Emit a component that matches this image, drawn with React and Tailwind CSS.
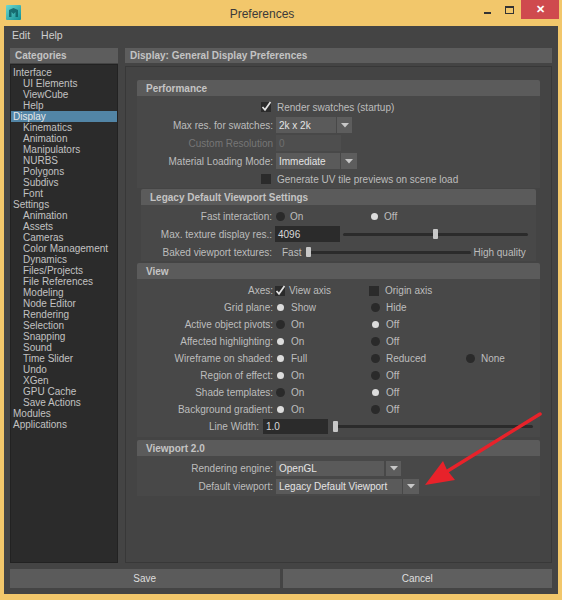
import React from 'react';

const categories = [
  ['Interface', 0], ['UI Elements', 1], ['ViewCube', 1], ['Help', 1], ['Display', 0, true],
  ['Kinematics', 1], ['Animation', 1], ['Manipulators', 1], ['NURBS', 1], ['Polygons', 1],
  ['Subdivs', 1], ['Font', 1], ['Settings', 0], ['Animation', 1], ['Assets', 1], ['Cameras', 1],
  ['Color Management', 1], ['Dynamics', 1], ['Files/Projects', 1], ['File References', 1],
  ['Modeling', 1], ['Node Editor', 1], ['Rendering', 1], ['Selection', 1], ['Snapping', 1],
  ['Sound', 1], ['Time Slider', 1], ['Undo', 1], ['XGen', 1], ['GPU Cache', 1],
  ['Save Actions', 1], ['Modules', 0], ['Applications', 0],
];

const viewRadios = [
  ['Grid plane:', ['Show', 'Hide'], 0],
  ['Active object pivots:', ['On', 'Off'], 1],
  ['Affected highlighting:', ['On', 'Off'], 0],
  ['Wireframe on shaded:', ['Full', 'Reduced', 'None'], 0],
  ['Region of effect:', ['On', 'Off'], 0],
  ['Shade templates:', ['On', 'Off'], 1],
  ['Background gradient:', ['On', 'Off'], 0],
];

function Radio({ on }) {
  return (
    <div className="w-[8px] h-[8px] flex items-center justify-center shrink-0">
      {on ? (
        <div className="w-[7px] h-[7px] rounded-full bg-[#dcdcdc] shrink-0" />
      ) : (
        <div className="w-[9px] h-[9px] rounded-full bg-[#2a2a2a] shrink-0" />
      )}
    </div>
  );
}

function Check({ on }) {
  return (
    <div className="relative w-[10px] h-[10px] bg-[#2b2b2b] shrink-0">
      {on && (
        <svg className="absolute -top-[2px] left-0" width="11" height="12" viewBox="0 0 11 12">
          <path d="M1.5 7 L4 9.8 L9.5 2" fill="none" stroke="#e2e2e2" strokeWidth="1.7" />
        </svg>
      )}
    </div>
  );
}

function Dropdown({ value, w, aw = 15, gap = 'ml-[1px]', h = 'h-[16px]' }) {
  return (
    <div className="flex items-center">
      <div className={`${w} ${h} bg-[#5a5a5a] text-[#e4e4e4] pl-[3px] flex items-center whitespace-nowrap`}>{value}</div>
      <div className={`${gap} ${h} bg-[#5d5d5d] flex items-center justify-center`} style={{ width: aw }}>
        <svg width="8" height="5" viewBox="0 0 8 5">
          <path d="M0 0 L8 0 L4 4.5 Z" fill="#c8c8c8" />
        </svg>
      </div>
    </div>
  );
}

function SectionHeader({ title }) {
  return (
    <div className="h-[16px] bg-[#5b5b5b] rounded-t-[2px] pl-[9px] flex items-center font-bold text-[#c4c4c4]">
      {title}
    </div>
  );
}

export default function App() {
  return (
    <div className="relative w-[562px] h-[600px] bg-[#f2c76b] flex flex-col overflow-hidden font-['Liberation_Sans',Arial,sans-serif] text-[10px] text-[#bdbdbd] whitespace-nowrap">
      {/* Title bar */}
      <div className="h-[26px] flex items-start shrink-0">
        <div className="w-[26px] pl-[6px] pt-[5px]">
          <svg width="15" height="15" viewBox="0 0 15 15">
            <defs>
              <linearGradient id="mi" x1="0" y1="0" x2="1" y2="1">
                <stop offset="0" stopColor="#6fd9d0" />
                <stop offset="1" stopColor="#128f95" />
              </linearGradient>
            </defs>
            <rect x="0" y="0" width="15" height="15" rx="1" fill="url(#mi)" />
            <path d="M3 12 L3 5 L7.5 3 L12 5 L12 12 L9.5 12 L9.5 7 L7.5 9 L5.5 7 L5.5 12 Z" fill="#0d5b60" opacity="0.8" />
          </svg>
        </div>
        <div className="flex-1 text-center pl-[18px] pt-[5px] text-[12px] text-[#3a3a3a]">Preferences</div>
        <div className="w-[82px] flex items-start">
          <div className="w-[7px] h-[2px] bg-[#333] mt-[12px] ml-[4px]" />
          <div className="w-[9px] h-[8px] border border-[#333] border-t-2 mt-[6px] ml-[14px]" />
          <div className="ml-[7px] w-[38px] h-[19px] bg-[#cf4a4e] flex items-center justify-center text-white font-bold text-[11px]">
            ✕
          </div>
        </div>
      </div>

      {/* Window body */}
      <div className="flex-1 mx-[4px] mb-[6px] bg-[#444444] flex flex-col px-[6px] pb-[6px]">
        {/* Menu */}
        <div className="h-[20px] flex items-center gap-[11px] pl-[2px] text-[10.5px] text-[#cfcfcf]">
          <span>Edit</span>
          <span>Help</span>
        </div>

        <div className="mt-[2px] h-[515px] flex gap-[7px]">
          {/* Categories */}
          <div className="w-[108px] shrink-0 flex flex-col">
            <div className="h-[15px] bg-[#5d5d5d] pl-[5px] flex items-center font-bold text-[#c4c4c4]">Categories</div>
            <div className="mt-[1px] flex-1 bg-[#2b2b2b] border border-[#222] pt-[2px] overflow-hidden">
              {categories.map(([name, lvl, sel], i) => (
                <div
                  key={i}
                  className={`h-[11px] leading-[11px] ${lvl ? 'pl-[12px]' : 'pl-[2px]'} ${sel ? 'bg-[#5285a6] text-[#e8e8e8]' : 'text-[#c2c2c2]'}`}
                >
                  {name}
                </div>
              ))}
            </div>
          </div>

          {/* Right panel */}
          <div className="flex-1 min-w-0 flex flex-col">
            <div className="h-[15px] bg-[#5d5d5d] pl-[5px] flex items-center font-bold text-[#c4c4c4]">
              Display: General Display Preferences
            </div>
            <div className="mt-[3px] flex-1 bg-[#444] border border-[#383838] px-[11px] pt-[13px] overflow-hidden">
              {/* Performance */}
              <SectionHeader title="Performance" />
              <div className="bg-[#484848] pt-[2px]">
                <div className="h-[18px] flex items-center">
                  <div className="w-[136px] shrink-0 flex justify-end pr-[2px]"><Check on /></div>
                  <span className="ml-[4px]">Render swatches (startup)</span>
                </div>
                <div className="h-[18px] flex items-center">
                  <div className="w-[136px] shrink-0 text-right">Max res. for swatches:</div>
                  <div className="ml-[3px]"><Dropdown value="2k x 2k" w="w-[60px]" /></div>
                </div>
                <div className="h-[18px] flex items-center">
                  <div className="w-[136px] shrink-0 text-right text-[#767676]">Custom Resolution</div>
                  <div className="ml-[3px] w-[65px] h-[16px] bg-[#4e4e4e] pl-[3px] flex items-center text-[#6e6e6e]">0</div>
                </div>
                <div className="h-[18px] flex items-center">
                  <div className="w-[136px] shrink-0 text-right">Material Loading Mode:</div>
                  <div className="ml-[3px]"><Dropdown value="Immediate" w="w-[64px]" aw={16} /></div>
                </div>
                <div className="h-[18px] flex items-center">
                  <div className="w-[136px] shrink-0 flex justify-end pr-[2px]"><Check /></div>
                  <span className="ml-[4px]">Generate UV tile previews on scene load</span>
                </div>
              </div>

              {/* Legacy */}
              <div className="mt-[1px] mx-[4px]">
                <SectionHeader title="Legacy Default Viewport Settings" />
                <div className="bg-[#484848] pt-[2px]">
                  <div className="h-[18px] flex items-center">
                    <div className="w-[131px] shrink-0 text-right">Fast interaction:</div>
                    <div className="ml-[3px] w-[94px] flex items-center pl-[1px]">
                      <Radio /><span className="ml-[6px]">On</span>
                    </div>
                    <div className="w-[94px] flex items-center pl-[1px]">
                      <Radio on /><span className="ml-[6px]">Off</span>
                    </div>
                  </div>
                  <div className="h-[18px] flex items-center">
                    <div className="w-[131px] shrink-0 text-right">Max. texture display res.:</div>
                    <div className="ml-[3px] w-[65px] shrink-0 h-[16px] bg-[#2b2b2b] pl-[3px] flex items-center text-[#d8d8d8]">4096</div>
                    <div className="ml-[3px] flex-1 mr-[8px] flex items-center">
                      <div className="w-[90px] h-[3px] bg-[#2b2b2b] rounded-l-full" />
                      <div className="w-[5px] h-[10px] bg-[#c8c8c8] rounded-[1px]" />
                      <div className="flex-1 h-[3px] bg-[#2b2b2b] rounded-r-full" />
                    </div>
                  </div>
                  <div className="h-[18px] flex items-center">
                    <div className="w-[131px] shrink-0 text-right">Baked viewport textures:</div>
                    <span className="ml-[10px]">Fast</span>
                    <div className="ml-[5px] w-[5px] h-[10px] bg-[#c8c8c8] rounded-[1px]" />
                    <div className="w-[160px] h-[3px] bg-[#2b2b2b] rounded-r-full" />
                    <span className="ml-[2px]">High quality</span>
                  </div>
                </div>
              </div>

              {/* View */}
              <div className="mt-[2px]">
                <SectionHeader title="View" />
                <div className="bg-[#484848] pt-[3px] pb-[2px]">
                  <div className="h-[17px] flex items-center">
                    <div className="w-[136px] shrink-0 text-right">Axes:</div>
                    <div className="ml-[2px] w-[94px] flex items-center">
                      <Check on /><span className="ml-[4px]">View axis</span>
                    </div>
                    <div className="w-[95px] flex items-center">
                      <Check /><span className="ml-[6px]">Origin axis</span>
                    </div>
                  </div>
                  {viewRadios.map(([label, opts, sel]) => (
                    <div key={label} className="h-[17px] flex items-center">
                      <div className="w-[136px] shrink-0 text-right">{label}</div>
                      <div className="ml-[3px] flex">
                        {opts.map((o, i) => (
                          <div key={o} className={`${i < 2 ? 'w-[95px]' : ''} flex items-center`}>
                            <Radio on={i === sel} /><span className="ml-[7px]">{o}</span>
                          </div>
                        ))}
                      </div>
                    </div>
                  ))}
                  <div className="h-[17px] flex items-center">
                    <div className="w-[122px] shrink-0 text-right">Line Width:</div>
                    <div className="ml-[4px] w-[65px] shrink-0 h-[15px] bg-[#2b2b2b] pl-[3px] flex items-center text-[#d8d8d8]">1.0</div>
                    <div className="ml-[5px] w-[5px] h-[11px] bg-[#c8c8c8] rounded-[1px]" />
                    <div className="flex-1 mr-[7px] h-[3px] bg-[#2b2b2b] rounded-r-full" />
                  </div>
                </div>
              </div>

              {/* Viewport 2.0 */}
              <div className="mt-[3px]">
                <SectionHeader title="Viewport 2.0" />
                <div className="bg-[#484848] pt-[3px] pb-[1px]">
                  <div className="h-[18px] flex items-center">
                    <div className="w-[136px] shrink-0 text-right">Rendering engine:</div>
                    <div className="ml-[3px]"><Dropdown value="OpenGL" w="w-[108px]" gap="ml-[2px]" h="h-[15px]" /></div>
                  </div>
                  <div className="h-[18px] flex items-center">
                    <div className="w-[136px] shrink-0 text-right">Default viewport:</div>
                    <div className="ml-[3px]"><Dropdown value="Legacy Default Viewport" w="w-[126px]" aw={16} h="h-[15px]" /></div>
                  </div>
                </div>
              </div>
            </div>
          </div>
        </div>

        {/* Buttons */}
        <div className="mt-[6px] h-[19px] flex gap-[3px] text-[#dedede]">
          <button className="flex-1 bg-[#5b5b5b]">Save</button>
          <button className="flex-1 bg-[#5f5f5f]">Cancel</button>
        </div>
      </div>

      {/* Annotation arrow */}
      <svg className="absolute inset-0 pointer-events-none" width="562" height="600" viewBox="0 0 562 600">
        <line x1="540" y1="414" x2="446" y2="472" stroke="#e8222a" strokeWidth="3.5" strokeLinecap="round" />
        <polygon points="425,485 443,461 447,470 455,480" fill="#e8222a" />
      </svg>
    </div>
  );
}
